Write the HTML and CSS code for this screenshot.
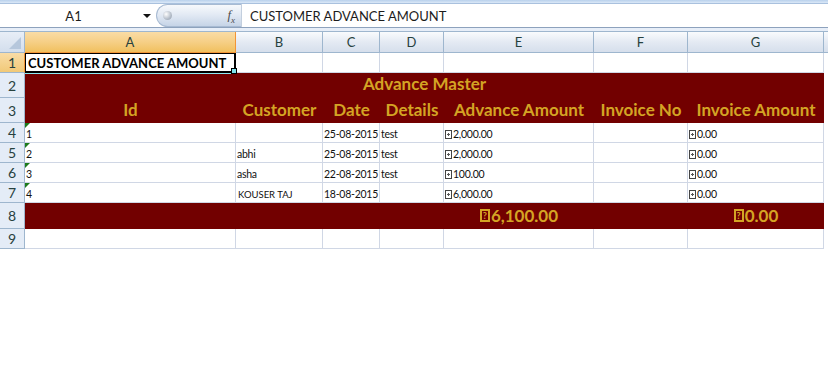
FILE: index.html
```html
<!DOCTYPE html>
<html lang="en">
<head>
    <meta charset="UTF-8">
    <title>Advance Master</title>
    <link rel="stylesheet" href="styles.css">
</head>
<body>
    <div class="ribbon-edge"></div>
    <div class="formula-bar">
        <div class="name-box">
            <span class="name">A1</span>
            <span class="drop"></span>
        </div>
        <div class="fx-pill">
            <span class="knob"></span>
            <span class="fx">f<sub>x</sub></span>
        </div>
        <div class="formula">CUSTOMER ADVANCE AMOUNT</div>
    </div>
    <div class="bar-gap"></div>

    <div class="sheet">
        <!-- column headers -->
        <div class="corner"><span class="corner-mark"></span></div>
        <div class="col-head active">A</div>
        <div class="col-head">B</div>
        <div class="col-head">C</div>
        <div class="col-head">D</div>
        <div class="col-head">E</div>
        <div class="col-head">F</div>
        <div class="col-head">G</div>
        <div class="col-head edge"></div>

        <!-- row 1 -->
        <div class="row-head active">1</div>
        <div class="cell title selected">CUSTOMER ADVANCE AMOUNT<span class="handle"></span></div>
        <div class="cell"></div>
        <div class="cell"></div>
        <div class="cell"></div>
        <div class="cell"></div>
        <div class="cell"></div>
        <div class="cell"></div>
        <div class="cell edge"></div>

        <!-- row 2 -->
        <div class="row-head">2</div>
        <div class="cell band master">Advance Master</div>
        <div class="cell edge"></div>

        <!-- row 3 -->
        <div class="row-head">3</div>
        <div class="cell band head">Id</div>
        <div class="cell band head">Customer</div>
        <div class="cell band head">Date</div>
        <div class="cell band head">Details</div>
        <div class="cell band head">Advance Amount</div>
        <div class="cell band head">Invoice No</div>
        <div class="cell band head">Invoice Amount</div>
        <div class="cell edge"></div>

        <!-- rows 4-7 -->
        <div class="row-head">4</div>
        <div class="cell data flag">1</div>
        <div class="cell data"></div>
        <div class="cell data">25-08-2015</div>
        <div class="cell data">test</div>
        <div class="cell data money"><span class="rs"></span>2,000.00</div>
        <div class="cell data"></div>
        <div class="cell data money"><span class="rs"></span>0.00</div>
        <div class="cell edge"></div>

        <div class="row-head">5</div>
        <div class="cell data flag">2</div>
        <div class="cell data">abhi</div>
        <div class="cell data">25-08-2015</div>
        <div class="cell data">test</div>
        <div class="cell data money"><span class="rs"></span>2,000.00</div>
        <div class="cell data"></div>
        <div class="cell data money"><span class="rs"></span>0.00</div>
        <div class="cell edge"></div>

        <div class="row-head">6</div>
        <div class="cell data flag">3</div>
        <div class="cell data">asha</div>
        <div class="cell data">22-08-2015</div>
        <div class="cell data">test</div>
        <div class="cell data money"><span class="rs"></span>100.00</div>
        <div class="cell data"></div>
        <div class="cell data money"><span class="rs"></span>0.00</div>
        <div class="cell edge"></div>

        <div class="row-head">7</div>
        <div class="cell data flag">4</div>
        <div class="cell data small">KOUSER TAJ</div>
        <div class="cell data">18-08-2015</div>
        <div class="cell data"></div>
        <div class="cell data money"><span class="rs"></span>6,000.00</div>
        <div class="cell data"></div>
        <div class="cell data money"><span class="rs"></span>0.00</div>
        <div class="cell edge"></div>

        <!-- row 8 totals -->
        <div class="row-head">8</div>
        <div class="cell band"></div>
        <div class="cell band"></div>
        <div class="cell band"></div>
        <div class="cell band"></div>
        <div class="cell band total"><span class="rs-big">?</span>6,100.00</div>
        <div class="cell band"></div>
        <div class="cell band total"><span class="rs-big">?</span>0.00</div>
        <div class="cell edge"></div>

        <!-- row 9 -->
        <div class="row-head">9</div>
        <div class="cell"></div>
        <div class="cell"></div>
        <div class="cell"></div>
        <div class="cell"></div>
        <div class="cell"></div>
        <div class="cell"></div>
        <div class="cell"></div>
        <div class="cell edge"></div>
    </div>
</body>
</html>
```

FILE: styles.css
```css
body {
    margin: 0;
    background-color: #fff;
    font-family: Lato, "Open Sans", sans-serif;
    color: #000;
}
.ribbon-edge {
    height: 3px;
    background: linear-gradient(#b9d1ec, #dbe8f7);
    border-bottom: 1px solid #a9c1de;
}
.formula-bar {
    display: flex;
    height: 23px;
    background-color: #fff;
    border-bottom: 1px solid #8da2bd;
}
.name-box {
    width: 156px;
    display: flex;
    align-items: center;
}
.name-box .name {
    flex: 1;
    text-align: center;
    font-size: 13px;
    color: #1c1c1c;
    padding-left: 4px;
}
.drop {
    width: 0;
    height: 0;
    border-left: 4px solid transparent;
    border-right: 4px solid transparent;
    border-top: 4px solid #111;
    margin-right: 5px;
}
.fx-pill {
    width: 85px;
    height: 23px;
    display: flex;
    align-items: center;
    justify-content: space-between;
    border-radius: 12px 0 0 12px;
    background: linear-gradient(#f7f9fc, #e3eaf4 45%, #c6d4e7);
    border: 1px solid #a7bad2;
    border-right: none;
    box-sizing: border-box;
}
.knob {
    width: 9px;
    height: 9px;
    border-radius: 50%;
    margin-left: 6px;
    background: radial-gradient(circle at 35% 35%, #fff, #b3bcc8 60%, #8f99a6);
}
.fx {
    font-family: "Liberation Serif", serif;
    font-style: italic;
    font-size: 13px;
    color: #4d4d4d;
    margin-right: 6px;
}
.fx sub {
    font-size: 9px;
}
.formula {
    flex: 1;
    display: flex;
    align-items: center;
    padding-left: 8px;
    font-size: 13px;
    color: #1c1c1c;
    border-left: 1px solid #c3cfde;
}
.bar-gap {
    height: 3px;
    background-color: #e7eef8;
}
.sheet {
    display: grid;
    grid-template-columns: 25px 211px 87px 57px 64px 150px 94px 136px 4px;
    grid-template-rows: 21px 20px 25px 25px 20px 20px 20px 20px 26px 20px;
    border-top: 1px solid #9eb6ce;
}
.corner {
    background: linear-gradient(#e8eef7, #d3deed);
    border-right: 1px solid #9eb6ce;
    border-bottom: 1px solid #9eb6ce;
    position: relative;
}
.corner-mark {
    position: absolute;
    right: 3px;
    bottom: 3px;
    width: 0;
    height: 0;
    border-left: 12px solid transparent;
    border-bottom: 12px solid #b6c7dc;
}
.col-head {
    display: flex;
    align-items: center;
    justify-content: center;
    font-size: 13px;
    color: #27413e;
    background: linear-gradient(#f9fbfd, #e4eaf3 50%, #d6dfec);
    border-right: 1px solid #9eb6ce;
    border-bottom: 1px solid #9eb6ce;
}
.col-head.active {
    background: linear-gradient(#f9dca6, #f6cf86 50%, #f1c05f);
    border-right-color: #f29536;
    border-bottom-color: #f29536;
}
.col-head.edge {
    border-right: none;
}
.row-head {
    display: flex;
    align-items: center;
    justify-content: center;
    font-size: 14px;
    color: #27413e;
    background-color: #e4ecf7;
    border-right: 1px solid #9eb6ce;
    border-bottom: 1px solid #9eb6ce;
}
.row-head.active {
    background: linear-gradient(#f9dca6, #f1c978);
    border-right-color: #f29536;
}
.cell {
    display: flex;
    align-items: flex-end;
    padding: 0 1px 2px 2px;
    border-right: 1px solid #d0d7e5;
    border-bottom: 1px solid #d0d7e5;
    white-space: nowrap;
    overflow: hidden;
    position: relative;
}
.cell.edge {
    border-right: none;
    border-bottom: none;
    padding: 0;
}
.title {
    font-weight: bold;
    font-size: 13px;
    align-items: center;
    padding-bottom: 0;
    overflow: visible;
}
.selected {
    border: 2px solid #000;
    border-left-width: 1px;
    border-top-width: 1px;
    box-shadow: 0 1px 0 #8ee8f1;
    z-index: 2;
}
.handle {
    position: absolute;
    right: -3px;
    bottom: -3px;
    width: 4px;
    height: 4px;
    background-color: #7fe0ea;
    border: 1px solid #000;
}
.band {
    background-color: #720000;
    border-color: #720000;
    color: #d4a424;
    font-weight: bold;
}
.master {
    grid-column: 2 / 9;
    justify-content: center;
    font-size: 17px;
    padding-bottom: 3px;
}
.head {
    justify-content: center;
    font-size: 17px;
    padding-bottom: 2px;
}
.data {
    font-size: 10.5px;
    letter-spacing: -0.25px;
    color: #111;
    padding-left: 1px;
    padding-right: 0;
}
.data.small {
    font-size: 9.5px;
    letter-spacing: 0;
    padding-left: 2px;
}
.flag::before {
    content: "";
    position: absolute;
    top: 0;
    left: 0;
    border-top: 5px solid #1d7b1d;
    border-right: 5px solid transparent;
}
.rs {
    display: inline-block;
    width: 5px;
    height: 7px;
    border: 1px solid #444;
    margin-right: 1px;
    margin-bottom: 1px;
    background: radial-gradient(circle, #555 1px, transparent 1.2px);
}
.total {
    justify-content: center;
    align-items: center;
    font-size: 17px;
    padding-bottom: 0;
}
.rs-big {
    display: inline-flex;
    align-items: center;
    justify-content: center;
    width: 10px;
    height: 13px;
    border: 2px solid #d4a424;
    box-sizing: border-box;
    font-size: 9px;
    margin-right: 1px;
}
```
